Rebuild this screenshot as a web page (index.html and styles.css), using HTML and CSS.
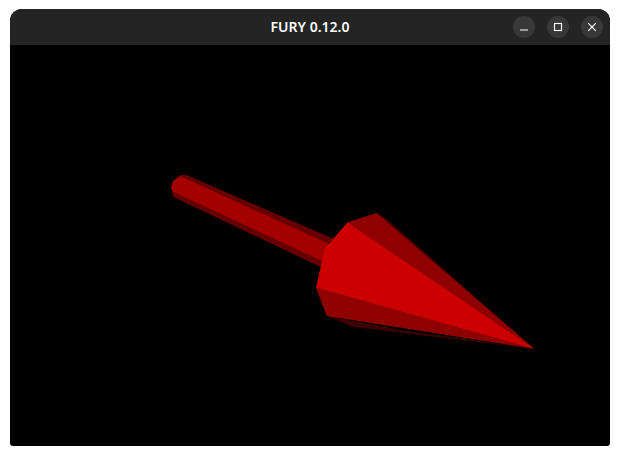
FILE: index.html
```html
<!DOCTYPE html>
<html lang="en">
<head>
<meta charset="utf-8">
<title>FURY 0.12.0</title>
<link rel="stylesheet" href="styles.css">
</head>
<body>
<div class="window">
  <header class="titlebar">
    <span class="spacer"></span>
    <h1 class="title">FURY 0.12.0</h1>
    <div class="controls">
      <button class="control" aria-label="Minimize"><svg class="glyph" viewBox="0 0 10 10"><path d="M1 8H9" /></svg></button>
      <button class="control" aria-label="Maximize"><svg class="glyph" viewBox="0 0 10 10"><rect x="1.5" y="1.5" width="7" height="7" /></svg></button>
      <button class="control" aria-label="Close"><svg class="glyph" viewBox="0 0 10 10"><path d="M1.2 1.2L8.8 8.8M8.8 1.2L1.2 8.8" /></svg></button>
    </div>
  </header>
  <svg class="scene" viewBox="10 45 600 401" shape-rendering="geometricPrecision">
    <polygon class="darkest" points="376.7,213 388,220 534.5,349 430,300" />
    <polygon class="darkest" points="326.7,316 336,320 352,326.7 534.5,349 400,330" />
    <polygon class="dark" points="180,175 186.5,175 334,239 327,244 180,177" />
    <polygon class="dark" points="171,189 173.5,197 320,266.7 330,271 330,260" />
    <polygon class="shaft" points="171,188 173,181 180,176 330,244.5 330,264.7 173.3,191.7" />
    <polygon class="mid" points="347.7,222.3 376.7,213 534.5,349" />
    <polygon class="mid" points="316,287.7 326.7,316 534.5,349" />
    <polygon class="bright" points="347.7,222.3 325,248.3 316,287.7 534.5,349" />
  </svg>
</div>
</body>
</html>
```
FILE: styles.css
```css
html, body {
  margin: 0;
  height: 100%;
  background: #fff;
}
body {
  padding: 9px 8px 6px 10px;
  box-sizing: border-box;
  overflow: hidden;
}
.window {
  width: 600px;
  height: 437px;
  display: flex;
  flex-direction: column;
  border-radius: 12px 12px 3px 3px;
  overflow: hidden;
  background: #000;
}
.titlebar {
  height: 36px;
  flex: none;
  display: grid;
  grid-template-columns: 1fr auto 1fr;
  align-items: center;
  background: #242424;
  color: #fff;
}
.title {
  margin: 0;
  font: 600 14px "Noto Sans", sans-serif;
  line-height: 36px;
}
.controls {
  display: flex;
  justify-content: flex-end;
  gap: 12px;
  padding-right: 7px;
}
.control {
  width: 22px;
  height: 22px;
  padding: 0;
  border: 0;
  border-radius: 50%;
  background: #383838;
  display: flex;
  align-items: center;
  justify-content: center;
}
.glyph {
  width: 10px;
  height: 10px;
  fill: none;
  stroke: #fff;
  stroke-width: 1.15;
}
.scene {
  display: block;
  width: 600px;
  height: 401px;
}
.bright { fill: #cc0000; }
.mid { fill: #8f0000; }
.shaft { fill: #a50000; }
.dark { fill: #660000; }
.darkest { fill: #3c0000; }
```
